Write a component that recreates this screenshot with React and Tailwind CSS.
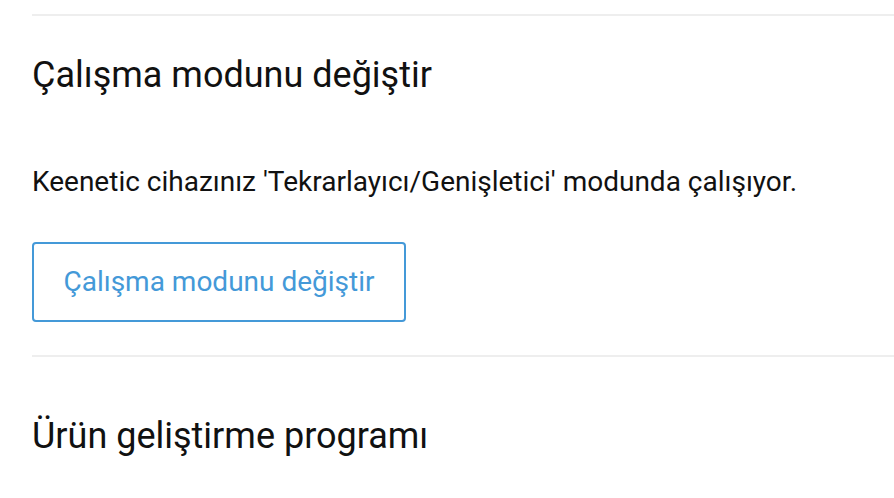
export default function App() {
  return (
    <div className="min-h-[498px] bg-white pl-8 pt-[14px] font-['Roboto',sans-serif] text-[#111]">
      <section className="border-t-2 border-[#eeeeee]">
        <h2 className="mt-[37px] text-[36px] leading-[44px]">Çalışma modunu değiştir</h2>
        <p className="mt-[67px] text-[28px] leading-[36px]">
          Keenetic cihazınız 'Tekrarlayıcı/Genişletici' modunda çalışıyor.
        </p>
        <button className="mt-[42px] mb-[33px] flex h-[80px] w-[374px] items-center justify-center rounded-[4px] border-2 border-[#4499d8] text-[28px] text-[#4499d8]">
          Çalışma modunu değiştir
        </button>
      </section>
      <section className="border-t-2 border-[#eeeeee]">
        <h2 className="mt-[57px] text-[36px] leading-[44px]">Ürün geliştirme programı</h2>
      </section>
    </div>
  );
}
